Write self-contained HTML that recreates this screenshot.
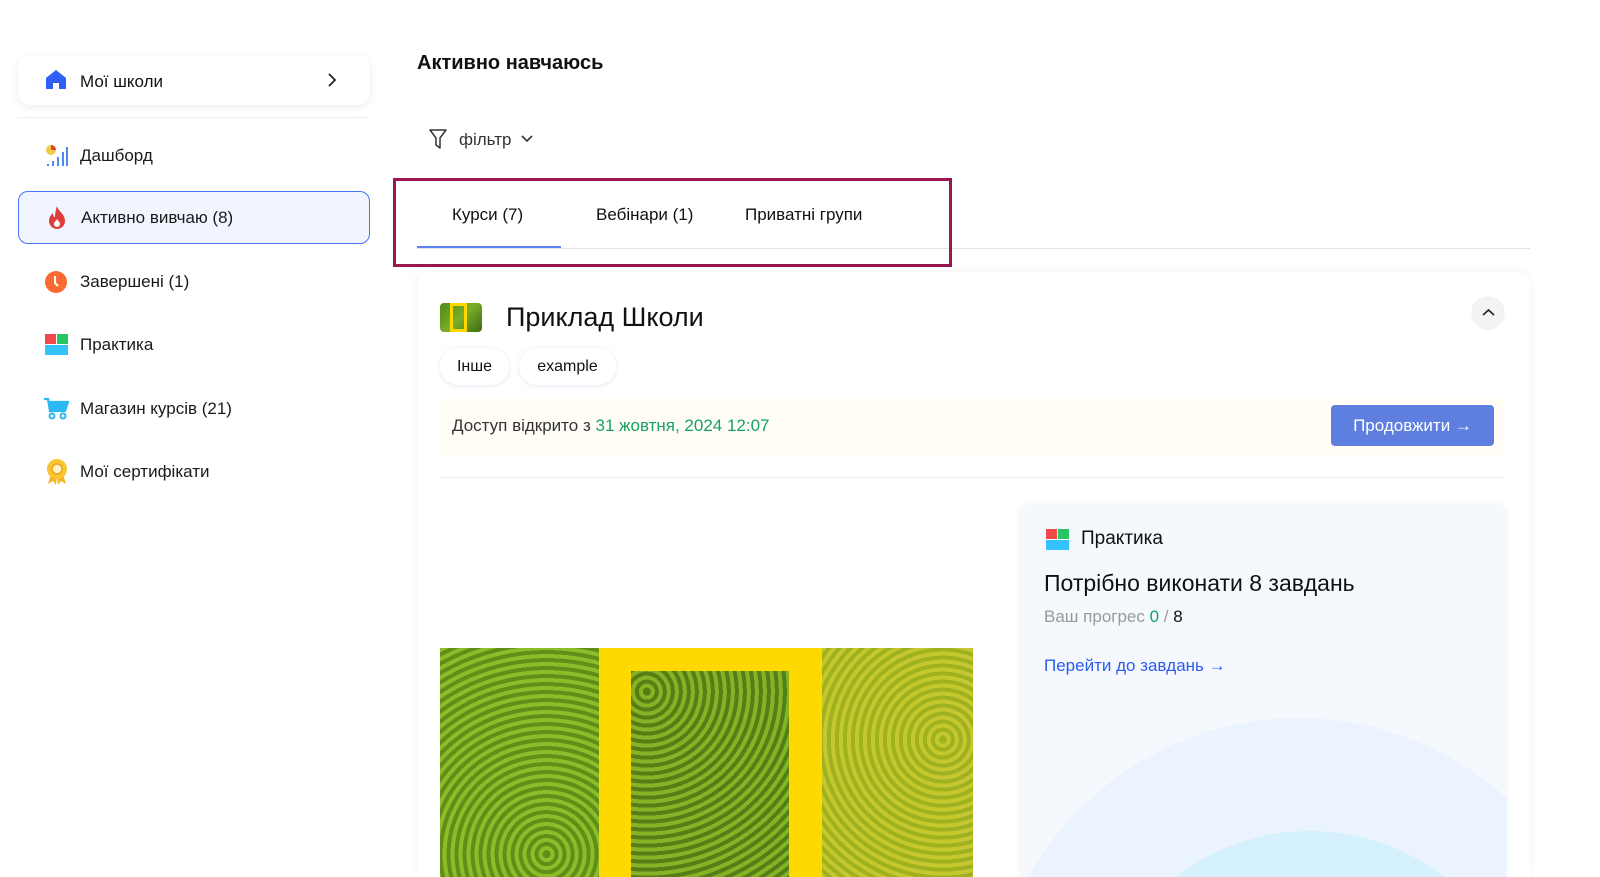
<!DOCTYPE html>
<html><head><meta charset="utf-8"><style>
*{box-sizing:border-box;margin:0;padding:0}
html,body{width:1600px;height:877px;overflow:hidden}
body{background:#fff;font-family:"Liberation Sans","DejaVu Sans",sans-serif;color:#111}
#wrap{position:relative;width:1600px;height:877px;overflow:hidden}
.abs{position:absolute}
.nav{position:absolute;left:18px;width:352px;height:53px;display:flex;align-items:center;font-size:17px;color:#1a1a1a}
.nav svg{position:absolute;left:27px}
.nav span{position:absolute;left:62px}
</style></head><body><div id="wrap">

<div class="abs" style="left:18px;top:55px;width:352px;height:50px;border-radius:12px;background:#fff;box-shadow:0 2px 8px rgba(0,0,0,.08)"></div>
<svg class="abs" style="left:45px;top:69px" width="22" height="21" viewBox="0 0 22 21"><path d="M11 1 L21 9 V20 H14 V14 H8 V20 H1 V9 Z" fill="#2f5ff5"/></svg>
<div class="abs" style="left:80px;top:72px;font-size:17px">Мої школи</div>
<svg class="abs" style="left:326px;top:72px" width="12" height="16" viewBox="0 0 12 16"><path d="M3 2 L9 8 L3 14" stroke="#222" stroke-width="1.8" fill="none"/></svg>
<div class="abs" style="left:18px;top:117px;width:352px;height:1px;background:#eee"></div>

<div class="nav" style="top:129px"><svg width="24" height="24" viewBox="0 0 24 24"><circle cx="6" cy="6" r="5" fill="#f3c94a"/><path d="M6 1 A5 5 0 0 1 11 6 H6Z" fill="#e0402e"/><rect x="2" y="20" width="2" height="2" fill="#4d8af0"/><rect x="7" y="17" width="2" height="5" fill="#4d8af0"/><rect x="12" y="13" width="2" height="9" fill="#4d8af0"/><rect x="17" y="8" width="2" height="14" fill="#4d8af0"/><rect x="21" y="3" width="2" height="19" fill="#4d8af0"/></svg><span>Дашборд</span></div>

<div class="abs" style="left:18px;top:191px;width:352px;height:53px;border:1.5px solid #4a72f5;border-radius:10px;background:#f1f5ff"></div>
<div class="nav" style="top:191px"><svg width="22" height="26" viewBox="0 0 22 26" style="left:28px"><path d="M11 1 C12 6 19 9 19 16 A8 8 0 0 1 3 16 C3 12 5 10 7 8 C7 11 8 12 9 12 C9 8 10 4 11 1Z" fill="#e23d3d"/><path d="M11 14 C12 16 14 17 14 19 A3 3 0 0 1 8 19 C8 17 10 16 11 14Z" fill="#fff"/></svg><span style="left:63px">Активно вивчаю (8)</span></div>

<div class="nav" style="top:255px"><svg width="22" height="22" viewBox="0 0 22 22"><circle cx="11" cy="11" r="11" fill="#fa6a32"/><path d="M10 5 V12 L13 15" stroke="#fff" stroke-width="2" fill="none"/></svg><span>Завершені (1)</span></div>

<div class="nav" style="top:318px"><svg width="23" height="22" viewBox="0 0 23 22"><rect x="0" y="0" width="11" height="10" fill="#f14949"/><rect x="12" y="0" width="11" height="10" fill="#27c464"/><rect x="0" y="11" width="23" height="10" fill="#34c2ff"/></svg><span>Практика</span></div>

<div class="nav" style="top:382px"><svg width="26" height="24" viewBox="0 0 26 24" style="left:25px"><path d="M1 2 H5 L7 14 H22 L25 5 H6" fill="none" stroke="#2cb8f2" stroke-width="2.2"/><path d="M6 5 H25 L22 14 H7Z" fill="#2cb8f2"/><circle cx="9" cy="19" r="2.5" fill="none" stroke="#2cb8f2" stroke-width="2"/><circle cx="20" cy="19" r="2.5" fill="none" stroke="#2cb8f2" stroke-width="2"/></svg><span>Магазин курсів (21)</span></div>

<div class="nav" style="top:445px"><svg width="24" height="28" viewBox="0 0 24 28"><path d="M6 16 L3 26 L8 23 L11 27 L12 18Z M18 16 L21 26 L16 23 L13 27 L12 18Z" fill="#f5b62b"/><circle cx="12" cy="11" r="10" fill="#f8c630"/><circle cx="12" cy="11" r="5" fill="#fff3c4" stroke="#f0a21d" stroke-width="1.5"/></svg><span>Мої сертифікати</span></div>

<div class="abs" style="left:417px;top:52px;font-size:20px;font-weight:bold">Активно навчаюсь</div>
<svg class="abs" style="left:429px;top:129px" width="18" height="20" viewBox="0 0 18 20"><path d="M1 1 H17 L11 9 V19 L7 16 V9 Z" fill="none" stroke="#333" stroke-width="1.5" stroke-linejoin="round"/></svg>
<div class="abs" style="left:459px;top:130px;font-size:17px;color:#333">фільтр</div>
<svg class="abs" style="left:520px;top:134px" width="14" height="10" viewBox="0 0 14 10"><path d="M2 2 L7 7 L12 2" stroke="#333" stroke-width="1.6" fill="none"/></svg>

<div class="abs" style="left:417px;top:248px;width:1113px;height:1px;background:#e3e3e3"></div>
<div class="abs" style="left:417px;top:246px;width:144px;height:2px;background:#5b82f5"></div>
<div class="abs" style="left:452px;top:205px;font-size:17px">Курси (7)</div>
<div class="abs" style="left:596px;top:205px;font-size:17px">Вебінари (1)</div>
<div class="abs" style="left:745px;top:205px;font-size:17px">Приватні групи</div>
<div class="abs" style="left:393px;top:178px;width:559px;height:89px;border:3px solid #9b1551"></div>

<div class="abs" style="left:417px;top:272px;width:1113px;height:605px;border-radius:12px 12px 0 0;background:#fff;box-shadow:0 0 10px rgba(0,0,0,.06)"></div>
<div class="abs" style="left:440px;top:303px;width:42px;height:29px;border-radius:4px;background:linear-gradient(135deg,#4d8a18,#7cad28,#3b6b12)"></div>
<div class="abs" style="left:450px;top:303px;width:17px;height:29px;border:3px solid #ffd800"></div>
<div class="abs" style="left:506px;top:302px;font-size:27px">Приклад Школи</div>
<div class="abs" style="left:1471px;top:296px;width:34px;height:34px;border-radius:50%;background:#f3f3f3"></div>
<svg class="abs" style="left:1482px;top:308px" width="13" height="9" viewBox="0 0 13 9"><path d="M1 7 L6.5 2 L12 7" stroke="#222" stroke-width="1.6" fill="none"/></svg>

<div class="abs" style="left:440px;top:348px;width:69px;height:37px;border-radius:19px;background:#fff;box-shadow:0 1px 5px rgba(80,90,160,.15);font-size:16px;text-align:center;line-height:37px">Інше</div>
<div class="abs" style="left:519px;top:348px;width:97px;height:37px;border-radius:19px;background:#fff;box-shadow:0 1px 5px rgba(80,90,160,.15);font-size:16px;text-align:center;line-height:37px">example</div>

<div class="abs" style="left:440px;top:398px;width:1066px;height:57px;background:#fffdf6"></div>
<div class="abs" style="left:452px;top:416px;font-size:17px;color:#333">Доступ відкрито з <span style="color:#16a361">31 жовтня, 2024 12:07</span></div>
<div class="abs" style="left:1331px;top:405px;width:163px;height:41px;border-radius:4px;background:#5f7fe0;color:#fff;font-size:17px;text-align:center;line-height:41px">Продовжити <b>→</b></div>
<div class="abs" style="left:440px;top:477px;width:1066px;height:1px;background:#eee"></div>

<div class="abs" style="left:440px;top:648px;width:533px;height:229px;overflow:hidden;background:repeating-radial-gradient(circle at 20% 90%,#5f8f16 0 4px,#8dbb2a 4px 8px)">
<div class="abs" style="left:382px;top:0;width:151px;height:229px;background:repeating-radial-gradient(circle at 80% 40%,#9fb11e 0 4px,#c4c72e 4px 8px)"></div>
<div class="abs" style="left:159px;top:0;width:223px;height:229px;background:#ffd800"></div>
<div class="abs" style="left:191px;top:23px;width:158px;height:206px;background:repeating-radial-gradient(circle at 10% 10%,#557f15 0 4px,#86b226 4px 8px)"></div>
</div>

<div class="abs" style="left:1019px;top:503px;width:488px;height:374px;border-radius:12px 12px 0 0;background:#f5f9fe;overflow:hidden;box-shadow:0 0 6px rgba(0,0,0,.04)">
<div class="abs" style="left:-30px;top:215px;width:620px;height:620px;border-radius:50%;background:#ebf4fe"></div>
<div class="abs" style="left:71px;top:328px;width:440px;height:440px;border-radius:50%;background:#d6f1fe"></div>
</div>
<svg class="abs" style="left:1046px;top:529px" width="23" height="22" viewBox="0 0 23 22"><rect x="0" y="0" width="11" height="10" fill="#f14949"/><rect x="12" y="0" width="11" height="10" fill="#27c464"/><rect x="0" y="11" width="23" height="10" fill="#34c2ff"/></svg>
<div class="abs" style="left:1081px;top:528px;font-size:19px">Практика</div>
<div class="abs" style="left:1044px;top:570px;font-size:23px">Потрібно виконати 8 завдань</div>
<div class="abs" style="left:1044px;top:607px;font-size:17px;color:#999">Ваш прогрес <span style="color:#16a361">0</span> / <span style="color:#111">8</span></div>
<div class="abs" style="left:1044px;top:656px;font-size:17px;color:#2b5cf0">Перейти до завдань →</div>
</div></body></html>
